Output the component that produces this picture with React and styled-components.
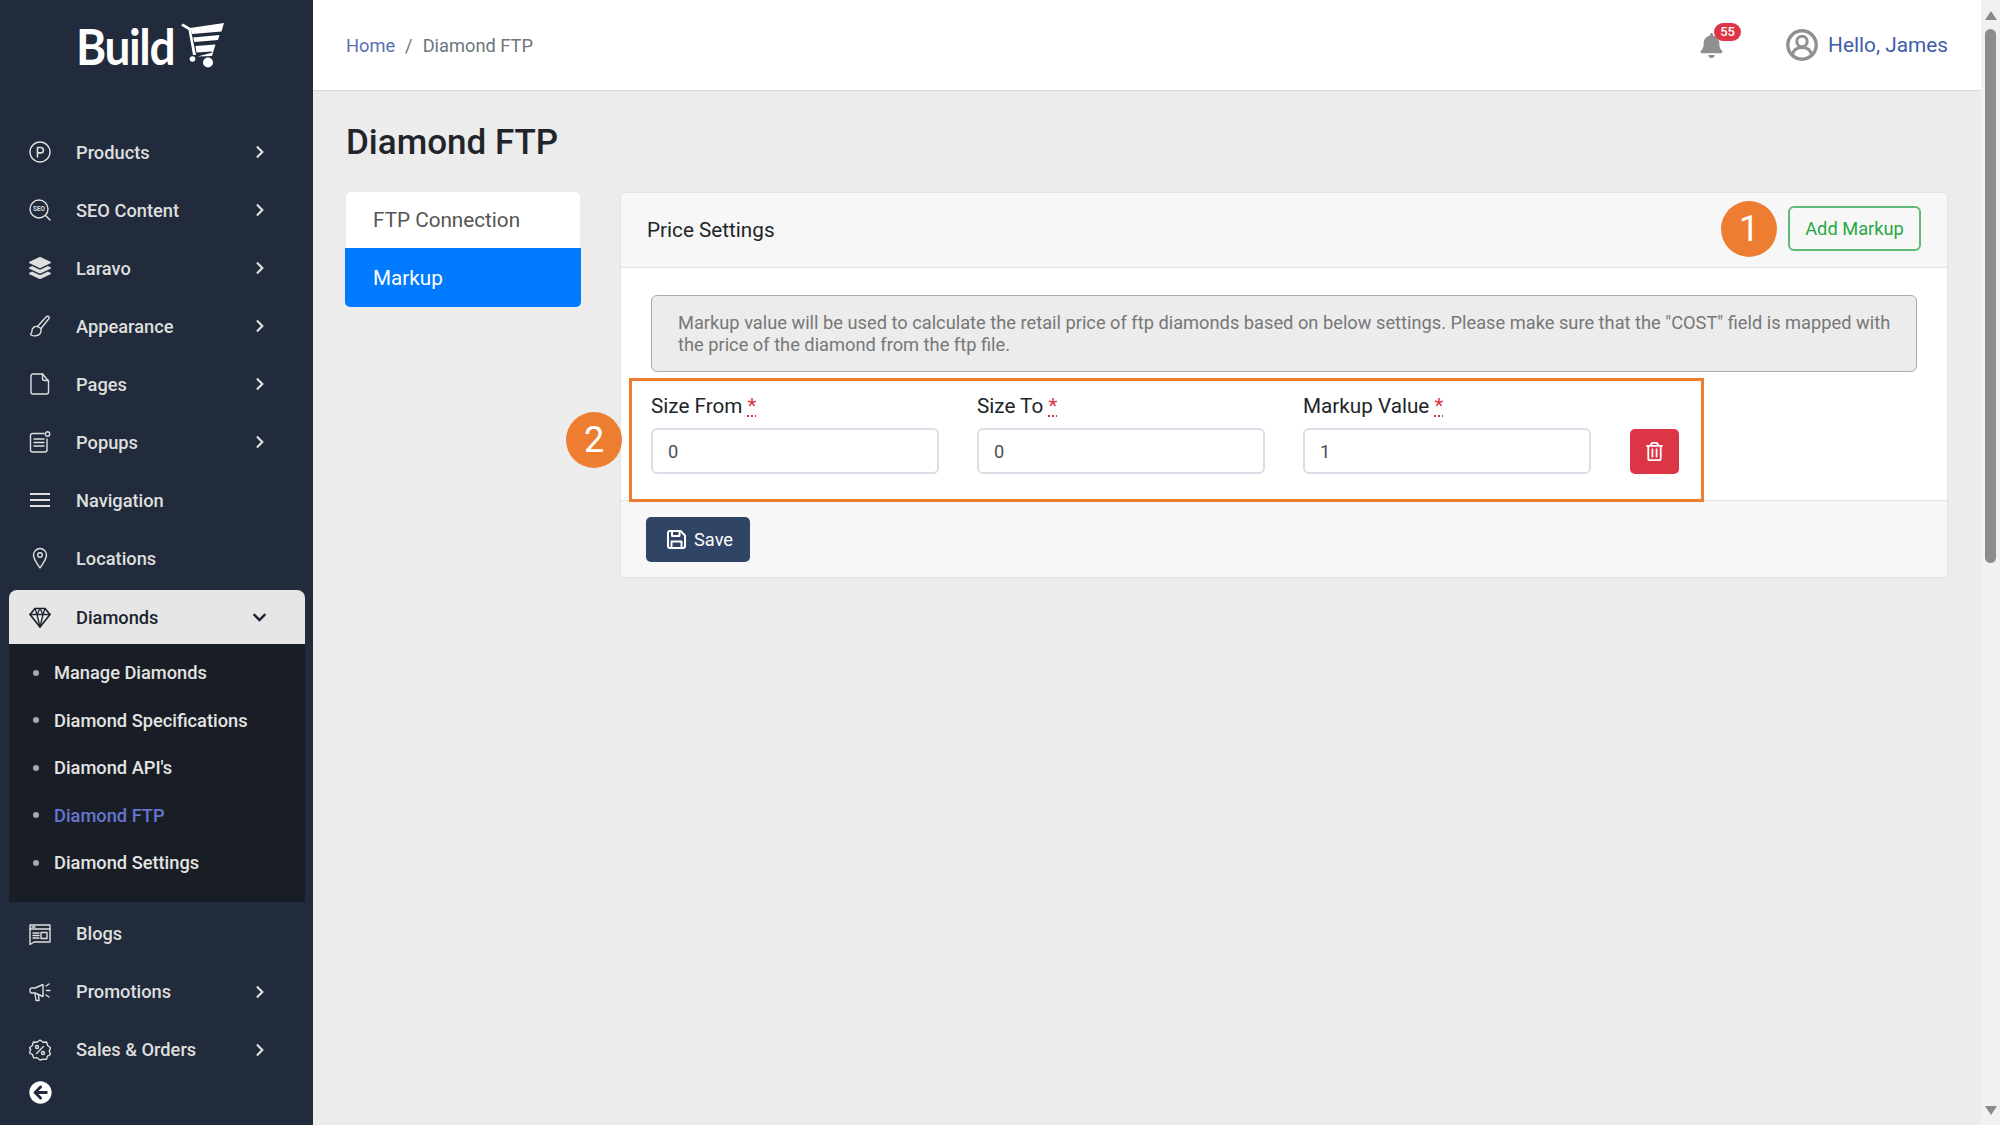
import React from 'react';
import styled, { createGlobalStyle } from 'styled-components';
import { FaChevronRight, FaChevronDown, FaArrowCircleLeft, FaBell, FaRegTrashAlt, FaLayerGroup } from 'react-icons/fa';

const GlobalStyle = createGlobalStyle`
	html, body {
		margin: 0;
		padding: 0;
		height: 100%;
		overflow: hidden;
		font-family: 'Roboto', 'Liberation Sans', sans-serif;
	}
	* {
		box-sizing: border-box;
	}
`;

const stroke = { fill: 'none', stroke: 'currentColor', strokeWidth: 1.4, strokeLinecap: 'round', strokeLinejoin: 'round' };

const Svg = ({ children }) => (
	<svg width="22" height="22" viewBox="0 0 22 22" {...stroke}>
		{children}
	</svg>
);

const ProductsIcon = () => (
	<Svg>
		<circle cx="11" cy="11" r="10" />
		<path d="M8.5 16V6.500h3.200a2.700 2.700 0 0 1 0 5.400H8.500" strokeWidth="1.600" />
	</Svg>
);

const SeoIcon = () => (
	<Svg>
		<circle cx="10" cy="10" r="9" />
		<path d="M16.500 16.500 21 21" />
		<text x="10" y="12.400" textAnchor="middle" fontSize="6.400" fontWeight="700" fill="currentColor" stroke="none" fontFamily="Roboto, sans-serif">
			SEO
		</text>
	</Svg>
);

const BrushIcon = () => (
	<Svg>
		<path d="M8.500 11.500 17 2c1.500-1.500 4-.5 3 1.500L12 13.500" />
		<path d="M8.500 11.500c-3-.5-5.500 1.500-5.500 4 0 1.500-.5 3-1.500 4 .8 1.300 3.500 1.500 5.500 1.200 3.500-.5 5.500-3.200 5-7.200z" />
	</Svg>
);

const PageIcon = () => (
	<Svg>
		<path d="M2 3a2 2 0 0 1 2-2h9.500L19.500 8v11a2 2 0 0 1-2 2H4a2 2 0 0 1-2-2z" />
		<path d="M13.500 1v4.500a2 2 0 0 0 2 2h4" />
	</Svg>
);

const PopupIcon = () => (
	<Svg>
		<path d="M15 2.500H3.500a2 2 0 0 0-2 2V19a2 2 0 0 0 2 2h12.500a2 2 0 0 0 2-2V8" />
		<circle cx="18.500" cy="3" r="2.200" />
		<path d="M5 8h10M5 11.500h10M5 15h10" />
	</Svg>
);

const MenuIcon = () => (
	<Svg>
		<path d="M1 5h20M1 11h20M1 17h20" strokeWidth="2" strokeLinecap="butt" />
	</Svg>
);

const PinIcon = () => (
	<Svg>
		<path d="M11 21c-1.800-3-6.500-8.500-6.500-13a6.500 6.500 0 0 1 13 0c0 4.500-4.700 10-6.500 13z" />
		<circle cx="11" cy="8" r="2.300" />
	</Svg>
);

const DiamondIcon = () => (
	<Svg>
		<path d="M6 2.500h10l5 6-10 12.500L1 8.500z" strokeWidth="1.700" />
		<path d="M1 8.500h20M8 8.500 11 21l3-12.500M6 2.500l2 6 3-6 3 6 2-6" strokeWidth="1.300" />
	</Svg>
);

const BlogIcon = () => (
	<Svg>
		<path d="M1 2h20v17H5l-4 2.500z" />
		<path d="M1 6h20M3 4h3" />
		<path d="M4 10h6M4 12.500h6M4 15h6" />
		<rect x="12" y="9.500" width="6" height="6" />
	</Svg>
);

const PromoIcon = () => (
	<Svg>
		<path d="M14 3.500 6 7H3a2 2 0 0 0-2 2v1a2 2 0 0 0 2 2h3l8 3.500z" />
		<path d="M6 12.500 7 19.500h3l-.500-6" />
		<path d="M17 5l3-2M17.500 9.500H21M17 14l3 2" />
	</Svg>
);

const SalesIcon = () => (
	<Svg>
		<path d="M11 1l3 2.200 3.600-.2 1 3.500 2.900 2.200-1.200 3.400 1.200 3.400-3.100 1.700-1 3.200-3.400-.2L11 21l-3-2.300-3.400.2-1-3.200-3.100-1.700 1.200-3.400L.5 8.700l2.900-2.200 1-3.500L8 3.200z" />
		<path d="M14.500 7.500l-7 7" />
		<circle cx="8" cy="8" r="1.500" />
		<circle cx="14" cy="14" r="1.500" />
	</Svg>
);

const SaveIcon = () => (
	<svg width="19" height="19" viewBox="0 0 19 19" fill="none" stroke="currentColor" strokeWidth="2" strokeLinejoin="round">
		<path d="M1 3a2 2 0 0 1 2-2h10.500L18 5.500V16a2 2 0 0 1-2 2H3a2 2 0 0 1-2-2z" />
		<path d="M5 1v5h7.500V1" />
		<path d="M4.500 18v-6.500h10V18" />
	</svg>
);

const UserIcon = () => (
	<svg width="32" height="32" viewBox="0 0 32 32" fill="none" stroke="#909090">
		<circle cx="16" cy="16" r="14.200" strokeWidth="3.400" />
		<circle cx="16" cy="12.500" r="5.200" strokeWidth="3" />
		<path d="M6.500 25.500c1-4.500 4.500-7 9.500-7s8.500 2.500 9.500 7" strokeWidth="3" />
	</svg>
);

const CartLogo = () => (
	<svg width="43" height="45" viewBox="0 0 43 45" fill="#fff">
		<path d="M0 2.500 2 .5l7.500 4.500 5.500 27h-3L7.500 7z" />
		<path d="M9 5 43 0l-2.500 8.500L11 11z" />
		<path d="M12 14.500l26.500-2.500-1.500 5L13.500 19z" />
		<path d="M14.500 23l20-1.500-3.500 11.500-14.500.5 15-4-1-1-15 1z" />
		<circle cx="11.500" cy="36" r="2.800" />
		<circle cx="27" cy="39.500" r="5" />
	</svg>
);

const menuTop = [
	{ label: 'Products', icon: <ProductsIcon />, more: true },
	{ label: 'SEO Content', icon: <SeoIcon />, more: true },
	{ label: 'Laravo', icon: <FaLayerGroup size={22} />, more: true },
	{ label: 'Appearance', icon: <BrushIcon />, more: true },
	{ label: 'Pages', icon: <PageIcon />, more: true },
	{ label: 'Popups', icon: <PopupIcon />, more: true },
	{ label: 'Navigation', icon: <MenuIcon /> },
	{ label: 'Locations', icon: <PinIcon /> },
];

const menuBottom = [
	{ label: 'Blogs', icon: <BlogIcon /> },
	{ label: 'Promotions', icon: <PromoIcon />, more: true },
	{ label: 'Sales & Orders', icon: <SalesIcon />, more: true },
];

const subMenu = ['Manage Diamonds', 'Diamond Specifications', "Diamond API's", 'Diamond FTP', 'Diamond Settings'];

const fields = [
	{ label: 'Size From', value: '0' },
	{ label: 'Size To', value: '0' },
	{ label: 'Markup Value', value: '1' },
];

const MenuItem = ({ item }) => (
	<Item>
		<ItemIcon>{item.icon}</ItemIcon>
		<span>{item.label}</span>
		{item.more && (
			<Chevron>
				<FaChevronRight size={14} />
			</Chevron>
		)}
	</Item>
);

const App = () => {
	return (
		<React.Fragment>
			<GlobalStyle />
			<Page>
				<Sidebar>
					<Logo>
						<LogoText>Build</LogoText>
						<CartLogo />
					</Logo>
					{menuTop.map(item => (
						<MenuItem key={item.label} item={item} />
					))}
					<ActiveItem>
						<ItemIcon>
							<DiamondIcon />
						</ItemIcon>
						<span>Diamonds</span>
						<Chevron>
							<FaChevronDown size={15} />
						</Chevron>
					</ActiveItem>
					<SubMenu>
						{subMenu.map(label => (
							<SubItem key={label} $active={label === 'Diamond FTP'}>
								<Bullet />
								{label}
							</SubItem>
						))}
					</SubMenu>
					{menuBottom.map(item => (
						<MenuItem key={item.label} item={item} />
					))}
					<BackArrow>
						<FaArrowCircleLeft size={23} />
					</BackArrow>
				</Sidebar>

				<Content>
					<TopBar>
						<Breadcrumb>
							<HomeLink>Home</HomeLink>
							<Slash>/</Slash>
							<span>Diamond FTP</span>
						</Breadcrumb>
						<TopRight>
							<Bell>
								<FaBell size={25} />
								<BellBadge>55</BellBadge>
							</Bell>
							<UserBox>
								<UserIcon />
								<Hello>Hello, James</Hello>
							</UserBox>
						</TopRight>
					</TopBar>

					<Main>
						<Title>Diamond FTP</Title>
						<Columns>
							<Tabs>
								<Tab>FTP Connection</Tab>
								<Tab $active>Markup</Tab>
							</Tabs>
							<Card>
								<CardHeader>
									<CardTitle>Price Settings</CardTitle>
									<HeaderActions>
										<Marker>1</Marker>
										<AddButton>Add Markup</AddButton>
									</HeaderActions>
								</CardHeader>
								<CardBody>
									<Notice>
										Markup value will be used to calculate the retail price of ftp diamonds based on below settings. Please make
										sure that the "COST" field is mapped with the price of the diamond from the ftp file.
									</Notice>
									<FieldRow>
										{fields.map(field => (
											<Field key={field.label}>
												<Label>
													{field.label} <Required>*</Required>
												</Label>
												<Input readOnly value={field.value} />
											</Field>
										))}
										<DeleteButton>
											<FaRegTrashAlt size={19} />
										</DeleteButton>
									</FieldRow>
									<Highlight>
										<HighlightMarker>2</HighlightMarker>
									</Highlight>
								</CardBody>
								<CardFooter>
									<SaveButton>
										<SaveIcon />
										Save
									</SaveButton>
								</CardFooter>
							</Card>
						</Columns>
					</Main>
				</Content>

				<Scrollbar>
					<ScrollArrow />
					<ScrollThumb />
					<ScrollArrow $down />
				</Scrollbar>
			</Page>
		</React.Fragment>
	);
};

export default App;

const Page = styled.div`
	display: flex;
	width: 2000px;
	height: 1125px;
	overflow: hidden;
	background-color: #ececec;
`;

const Sidebar = styled.aside`
	flex: 0 0 313px;
	height: 1125px;
	background-color: #212b3b;
	color: #dfdfdf;
	overflow: hidden;
`;

const Logo = styled.div`
	height: 123px;
	padding: 23px 0 0 76px;
	display: flex;
	align-items: flex-start;
`;

const LogoText = styled.div`
	width: 105px;
	font-family: 'Lato', sans-serif;
	font-weight: 700;
	font-size: 50px;
	line-height: 46px;
	letter-spacing: -1.500px;
	color: #fff;
	transform: scaleX(0.92);
	transform-origin: left center;
`;

const Item = styled.div`
	height: 58px;
	margin: 0 8px 0 9px;
	padding: 0 38px 0 20px;
	display: flex;
	align-items: center;
	font-size: 18.250px;
	font-weight: 500;
`;

const ActiveItem = styled(Item)`
	height: 54px;
	margin-top: 3px;
	background-color: #e6e6e6;
	color: #1c2430;
	border-radius: 8px 8px 0 0;
`;

const ItemIcon = styled.span`
	flex: 0 0 22px;
	height: 22px;
	margin-right: 25px;
	display: flex;
	align-items: center;
	justify-content: center;
`;

const Chevron = styled.span`
	margin-left: auto;
	display: flex;
`;

const SubMenu = styled.div`
	margin: 0 8px 3px 9px;
	padding: 5px 0 15px;
	background-color: #191d25;
`;

const SubItem = styled.div`
	height: 47.500px;
	padding-left: 24px;
	display: flex;
	align-items: center;
	font-size: 18.250px;
	font-weight: 500;
	color: ${props => (props.$active ? '#6675cf' : '#e4e4e4')};
`;

const Bullet = styled.span`
	width: 6px;
	height: 6px;
	margin-right: 15px;
	border-radius: 50%;
	background-color: #a9a9a9;
`;

const BackArrow = styled.div`
	margin: 2px 0 0 29px;
	color: #fff;
	display: flex;
`;

const Content = styled.div`
	flex: 1;
	min-width: 0;
	display: flex;
	flex-direction: column;
`;

const TopBar = styled.header`
	height: 91px;
	padding: 0 33px;
	background-color: #fff;
	border-bottom: 1px solid #d8d8d8;
	display: flex;
	align-items: center;
	justify-content: space-between;
`;

const Breadcrumb = styled.nav`
	display: flex;
	align-items: center;
	font-size: 18.250px;
	color: #6c757d;
`;

const HomeLink = styled.span`
	color: #5a6fb0;
`;

const Slash = styled.span`
	margin: 0 10px;
`;

const TopRight = styled.div`
	display: flex;
	align-items: center;
	gap: 62px;
`;

const Bell = styled.div`
	position: relative;
	display: flex;
	color: #8f8f8f;
`;

const BellBadge = styled.span`
	position: absolute;
	top: -10px;
	left: 15px;
	width: 27px;
	height: 18px;
	border-radius: 9px;
	background-color: #dc3545;
	color: #fff;
	font-size: 13px;
	font-weight: 500;
	line-height: 18px;
	text-align: center;
`;

const UserBox = styled.div`
	display: flex;
	align-items: center;
	gap: 10px;
`;

const Hello = styled.span`
	font-size: 20.800px;
	color: #3f5ea8;
`;

const Main = styled.main`
	flex: 1;
	padding: 30px 33px 0;
`;

const Title = styled.h1`
	margin: 0 0 28px;
	font-size: 35px;
	line-height: 43px;
	font-weight: 500;
	color: #212529;
`;

const Columns = styled.div`
	display: flex;
	align-items: flex-start;
	gap: 40px;
`;

const Tabs = styled.div`
	flex: 0 0 234px;
`;

const Tab = styled.div`
	height: ${props => (props.$active ? '59px' : '56px')};
	margin: ${props => (props.$active ? '0 -1px' : '0')};
	padding-left: ${props => (props.$active ? '28px' : '27px')};
	display: flex;
	align-items: center;
	font-size: 20.700px;
	background-color: ${props => (props.$active ? '#007bff' : '#fff')};
	color: ${props => (props.$active ? '#fff' : '#555')};
	border-radius: ${props => (props.$active ? '0 0 5px 5px' : '5px 5px 0 0')};
`;

const Card = styled.section`
	flex: 1;
	border: 1px solid #e3e3e3;
	border-radius: 5px;
	background-color: #fff;
`;

const CardHeader = styled.div`
	height: 75px;
	padding: 0 26px;
	display: flex;
	align-items: center;
	justify-content: space-between;
	background-color: #f7f7f7;
	border-bottom: 1px solid #e3e3e3;
	border-radius: 5px 5px 0 0;
`;

const CardTitle = styled.h2`
	margin: 0;
	font-size: 20.700px;
	font-weight: 400;
	color: #212529;
`;

const HeaderActions = styled.div`
	display: flex;
	align-items: center;
	gap: 11px;
	margin-bottom: 3px;
`;

const Marker = styled.div`
	width: 56px;
	height: 56px;
	border-radius: 50%;
	background-color: #ed7d31;
	color: #fff;
	font-size: 36px;
	line-height: 56px;
	text-align: center;
`;

const AddButton = styled.button`
	height: 45px;
	width: 133px;
	padding: 0;
	background: transparent;
	border: 2px solid #5fba75;
	border-radius: 6px;
	color: #28a745;
	font-family: inherit;
	font-size: 18.250px;
`;

const CardBody = styled.div`
	position: relative;
	padding: 27px 30px 26px;
`;

const Notice = styled.div`
	height: 77px;
	margin-bottom: 22px;
	padding: 16px 19px 0 26px;
	background-color: #ececec;
	border: 1px solid #a9a9a9;
	border-radius: 6px;
	font-size: 18.250px;
	line-height: 22px;
	color: #777;
`;

const FieldRow = styled.div`
	display: flex;
	align-items: flex-end;
	gap: 38px;
`;

const Field = styled.div`
	flex: 0 0 288px;
`;

const Label = styled.label`
	display: block;
	margin-bottom: 10px;
	font-size: 20.700px;
	line-height: 24px;
	color: #212529;
`;

const Required = styled.abbr`
	color: #dc3545;
	text-decoration: underline dotted;
`;

const Input = styled.input`
	display: block;
	width: 100%;
	height: 46px;
	padding: 0 15px;
	border: 2px solid #dcdde6;
	border-radius: 6px;
	font-family: inherit;
	font-size: 18.250px;
	color: #495057;
	background-color: #fff;
	outline: none;
`;

const DeleteButton = styled.button`
	flex: 0 0 49px;
	height: 45px;
	margin-left: 1px;
	padding: 0;
	display: flex;
	align-items: center;
	justify-content: center;
	background-color: #dc3545;
	border: none;
	border-radius: 5px;
	color: #fff;
`;

const Highlight = styled.div`
	position: absolute;
	top: 110px;
	left: 8px;
	width: 1075px;
	height: 124px;
	border: 3px solid #ed7d31;
	pointer-events: none;
`;

const HighlightMarker = styled(Marker)`
	position: absolute;
	top: 31px;
	left: -66px;
`;

const CardFooter = styled.div`
	height: 77px;
	padding: 16px 25px;
	background-color: #f7f7f7;
	border-top: 1px solid #e3e3e3;
	border-radius: 0 0 5px 5px;
`;

const SaveButton = styled.button`
	width: 104px;
	height: 45px;
	padding: 0 0 0 21px;
	display: flex;
	align-items: center;
	gap: 8px;
	background-color: #304565;
	border: none;
	border-radius: 5px;
	color: #fff;
	font-family: inherit;
	font-size: 18.250px;
`;

const Scrollbar = styled.div`
	flex: 0 0 19px;
	height: 1125px;
	display: flex;
	flex-direction: column;
	align-items: center;
	background-color: #f1f1f1;
`;

const ScrollArrow = styled.span`
	margin: ${props => (props.$down ? 'auto 0 10px' : '11px 0 9px')};
	width: 0;
	height: 0;
	border-left: 6px solid transparent;
	border-right: 6px solid transparent;
	border-${props => (props.$down ? 'top' : 'bottom')}: 9px solid #8a8a8a;
`;

const ScrollThumb = styled.div`
	width: 11px;
	height: 534px;
	border-radius: 6px;
	background-color: #8c8c8c;
`;
